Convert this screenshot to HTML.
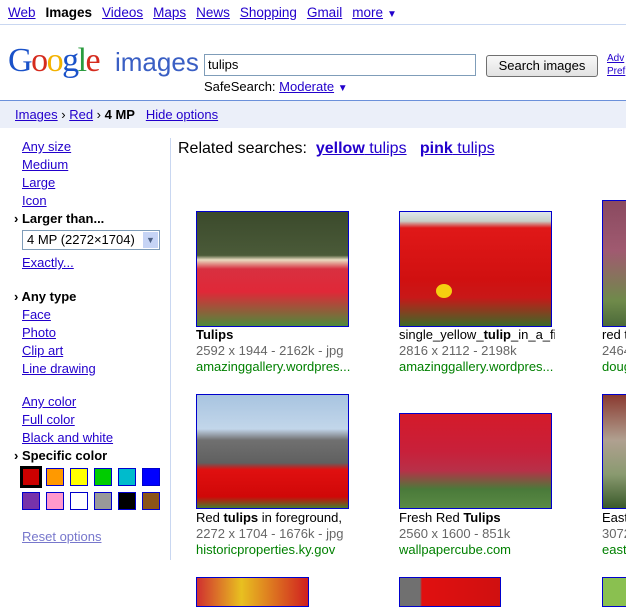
<!DOCTYPE html>
<html><head><style>
*{margin:0;padding:0}
body{width:626px;height:604px;overflow:hidden;background:#fff;font-family:"Liberation Sans",Arial,sans-serif;font-size:13px;position:relative}
a{color:#20c;text-decoration:underline}
.a{position:absolute;white-space:nowrap}
.img{position:absolute;border:1px solid #00c;box-sizing:border-box;overflow:hidden}
.c{position:absolute;font-size:13px;line-height:16px;white-space:nowrap;overflow:hidden}
.g{color:#666}.gr{color:#008000}
.sw{position:absolute;width:18px;height:18px;box-sizing:border-box;border:1px solid #00c}
.nav span,.nav a,.nav b{margin-right:10px}
</style></head><body>
<div class="a nav" style="left:8px;top:5px;line-height:16px;font-size:13.5px">
<a>Web</a><b>Images</b><a>Videos</a><a>Maps</a><a>News</a><a>Shopping</a><a>Gmail</a><a style="margin-right:4px">more</a><span style="color:#20c;font-size:10px">▼</span></div>
<div class="a" style="left:0;top:24px;width:626px;height:1px;background:#c9d7f1"></div>
<div class="a" style="left:8px;top:41px;font-family:'Liberation Serif',serif;font-size:34px;line-height:40px;letter-spacing:-1.5px"><span style="color:#1a52c9">G</span><span style="color:#d52b1e">o</span><span style="color:#f3b200">o</span><span style="color:#1a52c9">g</span><span style="color:#2a9b3e">l</span><span style="color:#d52b1e">e</span></div>
<div class="a" style="left:115px;top:46px;font-size:26px;color:#3a5fc4;line-height:32px">images</div>
<div class="a" style="left:204px;top:54px;width:272px;height:22px;border:1px solid #7f9db9;box-sizing:border-box;padding:2px 3px;font-size:13px">tulips</div>
<div class="a" style="left:486px;top:55px;width:112px;height:22px;border:1px solid #707070;border-radius:3px;background:linear-gradient(#f8f8f8,#e2e2e2);box-sizing:border-box;text-align:center;line-height:20px;font-size:13px">Search images</div>
<div class="a" style="left:607px;top:52px;font-size:10px;line-height:13px"><a>Adv</a><br><a>Pref</a></div>
<div class="a" style="left:204px;top:79px">SafeSearch: <a>Moderate</a> <span style="color:#20c;font-size:10px">▼</span></div>
<div class="a" style="left:0;top:100px;width:626px;height:1px;background:#6b90da"></div>
<div class="a" style="left:0;top:101px;width:626px;height:27px;background:#ebeff9"></div>
<div class="a" style="left:15px;top:107px"><a>Images</a> › <a>Red</a> › <b>4 MP</b>&nbsp;&nbsp;&nbsp;<a>Hide options</a></div>
<div class="a" style="left:170px;top:138px;width:1px;height:422px;background:#c9d7f1"></div>
<div class="a" style="left:22px;top:138px;line-height:18px">
<a>Any size</a><br><a>Medium</a><br><a>Large</a><br><a>Icon</a><br></div>
<div class="a" style="left:14px;top:210px;line-height:18px"><b>› Larger than...</b></div>
<div class="a" style="left:22px;top:230px;width:138px;height:20px;border:1px solid #7f9db9;box-sizing:border-box;font-size:13px;line-height:18px;padding-left:4px">4 MP (2272×1704)<span style="position:absolute;right:1px;top:1px;width:15px;height:16px;background:#c6d4f5;color:#4d6185;font-size:9px;text-align:center;line-height:16px">▼</span></div>
<div class="a" style="left:22px;top:254px;line-height:18px"><a>Exactly...</a></div>
<div class="a" style="left:14px;top:288px;line-height:18px"><b>› Any type</b></div>
<div class="a" style="left:22px;top:306px;line-height:18px"><a>Face</a><br><a>Photo</a><br><a>Clip art</a><br><a>Line drawing</a></div>
<div class="a" style="left:22px;top:393px;line-height:18px"><a>Any color</a><br><a>Full color</a><br><a>Black and white</a></div>
<div class="a" style="left:14px;top:447px;line-height:18px"><b>› Specific color</b></div>
<div class="sw" style="left:20px;top:466px;width:22px;height:22px;border:3px solid #000;background:#c00"></div>
<div class="sw" style="left:46px;top:468px;background:#f90"></div>
<div class="sw" style="left:70px;top:468px;background:#ff0"></div>
<div class="sw" style="left:94px;top:468px;background:#0c0"></div>
<div class="sw" style="left:118px;top:468px;background:#0bc"></div>
<div class="sw" style="left:142px;top:468px;background:#00f"></div>
<div class="sw" style="left:22px;top:492px;background:#73a"></div>
<div class="sw" style="left:46px;top:492px;background:#f9c"></div>
<div class="sw" style="left:70px;top:492px;background:#fff"></div>
<div class="sw" style="left:94px;top:492px;background:#999"></div>
<div class="sw" style="left:118px;top:492px;background:#000"></div>
<div class="sw" style="left:142px;top:492px;background:#8b5418"></div>
<div class="a" style="left:22px;top:529px"><a style="color:#77c">Reset options</a></div>
<div class="a" style="left:178px;top:140px;font-size:16px">Related searches:&nbsp; <a><b>yellow</b> tulips</a>&nbsp;&nbsp; <a><b>pink</b> tulips</a></div>

<div class="img" style="left:196px;top:211px;width:153px;height:116px;background:linear-gradient(#3b4a2c 0,#4a5a38 38%,#e9dcc0 42%,#d83040 50%,#e02838 70%,#4f8a3c 100%)"></div>
<div class="c" style="left:196px;top:327px;width:160px"><b>Tulips</b><br><span class="g">2592 x 1944 - 2162k - jpg</span><br><span class="gr">amazinggallery.wordpres...</span></div>
<div class="img" style="left:399px;top:211px;width:153px;height:116px;background:linear-gradient(#dfe6ec 0,#c8d0c8 8%,#e01818 14%,#d01010 60%,#c81818 75%,#3d6a28 100%)"><div style="position:absolute;left:36px;top:72px;width:16px;height:14px;border-radius:50%;background:#f5d010"></div></div>
<div class="c" style="left:399px;top:327px;width:156px">single_yellow_<b>tulip</b>_in_a_fi<br><span class="g">2816 x 2112 - 2198k</span><br><span class="gr">amazinggallery.wordpres...</span></div>
<div class="img" style="left:602px;top:200px;width:30px;height:127px;background:linear-gradient(#8a4a60,#a05a70 40%,#6f8a4a 80%,#4c6a3a)"></div>
<div class="c" style="left:602px;top:327px;width:30px">red t<br><span class="g">2464</span><br><span class="gr">doug</span></div>

<div class="img" style="left:196px;top:394px;width:153px;height:115px;background:linear-gradient(#a8c4e0 0,#c2d6ea 30%,#707070 40%,#606060 60%,#e01010 66%,#d00808 90%,#4a7a2c 100%)"></div>
<div class="c" style="left:196px;top:510px;width:160px">Red <b>tulips</b> in foreground,<br><span class="g">2272 x 1704 - 1676k - jpg</span><br><span class="gr">historicproperties.ky.gov</span></div>
<div class="img" style="left:399px;top:413px;width:153px;height:96px;background:linear-gradient(#d41a2a 0,#c8203a 40%,#b83048 60%,#4a7a3a 80%,#5a8a44 100%)"></div>
<div class="c" style="left:399px;top:510px;width:156px">Fresh Red <b>Tulips</b><br><span class="g">2560 x 1600 - 851k</span><br><span class="gr">wallpapercube.com</span></div>
<div class="img" style="left:602px;top:394px;width:30px;height:115px;background:linear-gradient(#8a3a30,#b0a090 40%,#8a9a70 70%,#3a5a2a)"></div>
<div class="c" style="left:602px;top:510px;width:30px">East<br><span class="g">3072</span><br><span class="gr">east</span></div>

<div class="img" style="left:196px;top:577px;width:113px;height:30px;background:linear-gradient(90deg,#d03030,#e8c020 40%,#d02020)"></div>
<div class="img" style="left:399px;top:577px;width:102px;height:30px;background:linear-gradient(90deg,#707070 0,#707070 20%,#e01010 22%,#d01010)"></div>
<div class="img" style="left:602px;top:577px;width:30px;height:30px;background:#8ac050"></div>
</body></html>
